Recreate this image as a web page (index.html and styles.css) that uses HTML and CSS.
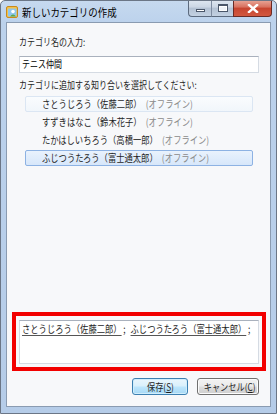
FILE: index.html
```html
<!DOCTYPE html>
<html lang="ja">
<head>
<meta charset="utf-8">
<title>新しいカテゴリの作成</title>
<link rel="stylesheet" href="styles.css">
</head>
<body>
<div class="window">
  <div class="titlebar">
    <svg class="appicon" width="14" height="14" viewBox="0 0 14 14">
      <rect x="1.5" y="1.5" width="11" height="11" rx="1.5" fill="#f4c24a" stroke="#c98a1c"/>
      <rect x="3" y="3.5" width="8.5" height="8" rx="1" fill="#8fc6ec"/>
      <circle cx="8" cy="6.5" r="1.8" fill="#ffffff"/>
      <path d="M5 11.5 Q8 7.5 11 11.5 Z" fill="#5ba84a"/>
    </svg>
    <span class="title"><span class="cond-t">新しいカテゴリの作成</span></span>
    <div class="caption">
      <div class="cbtn cmin"><span class="g-min"></span></div>
      <div class="cbtn cmax"><span class="g-max"></span></div>
      <div class="cbtn cclose">
        <svg width="12" height="9" viewBox="0 0 12 9"><path d="M2 1 L10 8 M10 1 L2 8" stroke="#ffffff" stroke-width="2.4" stroke-linecap="square"/></svg>
      </div>
    </div>
  </div>
  <div class="client">
    <div class="label"><span class="cond">カテゴリ名の入力:</span></div>
    <div class="input"><span class="cond">テニス仲間</span></div>
    <div class="label label2"><span class="cond">カテゴリに追加する知り合いを選択してください:</span></div>
    <ul class="list">
      <li class="item hover"><span class="cond wide">さとうじろう（佐藤二郎）<span class="status">(オフライン)</span></span></li>
      <li class="item"><span class="cond wide">すずきはなこ（鈴木花子）<span class="status">(オフライン)</span></span></li>
      <li class="item"><span class="cond wide">たかはしいちろう（高橋一郎）<span class="status">(オフライン)</span></span></li>
      <li class="item selected"><span class="cond wide">ふじつうたろう（富士通太郎）<span class="status">(オフライン)</span></span></li>
    </ul>
    <div class="highlight">
      <div class="textarea"><span class="cond wide"><span class="u">さとうじろう（佐藤二郎）</span><span class="sep">;</span><span class="u">ふじつうたろう（富士通太郎）</span><span class="sep">;</span></span></div>
    </div>
    <div class="buttons">
      <div class="btn default"><span class="cond-b">保存(<span class="ul">S</span>)</span></div>
      <div class="btn cancel"><span class="cond-b">キャンセル(<span class="ul">C</span>)</span></div>
    </div>
  </div>
</div>
</body>
</html>
```

FILE: styles.css
```css
html, body {
  margin: 0;
  padding: 0;
  background: #ffffff;
}
body {
  width: 277px;
  height: 414px;
  overflow: hidden;
  font-family: "Noto Sans CJK JP", "Noto Sans", sans-serif;
}
.window {
  box-sizing: border-box;
  width: 277px;
  height: 414px;
  border: 1px solid #6b7686;
  border-radius: 5px 5px 0 0;
  background: linear-gradient(#c6d9ef 0px, #bcd2ec 22px, #b5cce8 100%);
  padding: 0 5px 6px 5px;
  display: flex;
  flex-direction: column;
  overflow: hidden;
}
.titlebar {
  height: 21px;
  display: flex;
  align-items: center;
  flex: none;
}
.appicon {
  flex: none;
  margin-left: -1px;
  margin-top: 1px;
}
.title {
  margin-left: 3px;
  margin-top: 1px;
  font-size: 11px;
  color: #000000;
  line-height: 14px;
  white-space: nowrap;
}
.cond-t {
  display: inline-block;
  transform: scaleX(0.86);
  transform-origin: 0 50%;
}
.caption {
  margin-left: auto;
  margin-right: -1px;
  align-self: flex-start;
  margin-top: -1px;
  display: flex;
  height: 17px;
}
.cbtn {
  box-sizing: border-box;
  height: 17px;
  border: 1px solid #5c6a7e;
  border-top: none;
  display: flex;
  align-items: center;
  justify-content: center;
}
.cmin {
  width: 23px;
  border-radius: 0 0 0 4px;
  border-right: none;
  background: linear-gradient(#dfe7f1 0%, #cbd6e4 45%, #b3c1d3 50%, #c3d1e2 100%);
}
.cmax {
  width: 22px;
  border-right: none;
  border-left: 1px solid #7d8ba0;
  background: linear-gradient(#dfe7f1 0%, #cbd6e4 45%, #b3c1d3 50%, #c3d1e2 100%);
}
.cclose {
  width: 39px;
  border-radius: 0 0 4px 0;
  background: linear-gradient(#e9a99a 0%, #d8705e 45%, #c7442f 50%, #d2583f 100%);
  border-color: #6a2b25;
}
.g-min {
  display: block;
  width: 9px;
  height: 3px;
  margin-top: 5px;
  background: #ffffff;
  border: 1px solid #4a5669;
  box-sizing: border-box;
}
.g-max {
  display: block;
  width: 10px;
  height: 8px;
  box-sizing: border-box;
  border: 1px solid #4a5669;
  border-top-width: 2px;
  background: #eef2f7;
  box-shadow: inset 0 0 0 1px #ffffff;
}
.client {
  flex: 1;
  box-sizing: border-box;
  background: #f7f8fa;
  border: 1px solid #8a9bb1;
  padding: 12px 11px 11px 12px;
  display: flex;
  flex-direction: column;
  font-size: 10px;
  color: #1e1e1e;
  min-width: 0;
}
.cond {
  display: inline-block;
  white-space: nowrap;
  transform: scaleX(0.8);
  transform-origin: 0 50%;
}
.cond.wide {
  transform: scaleX(0.83);
}
.label {
  line-height: 14px;
  height: 14px;
  white-space: nowrap;
  overflow: hidden;
}
.label2 {
  margin-top: 5px;
}
.input {
  margin-top: 7px;
  box-sizing: border-box;
  height: 17px;
  border: 1px solid #d5dbe3;
  border-top-color: #a9b1bd;
  background: #ffffff;
  line-height: 14px;
  padding-left: 2px;
  color: #000000;
  white-space: nowrap;
  overflow: hidden;
}
.list {
  list-style: none;
  margin: 4px 0 0 0;
  padding: 0 6px;
  flex: 1;
}
.item {
  box-sizing: border-box;
  height: 16px;
  margin-bottom: 2px;
  border: 1px solid transparent;
  border-radius: 2px;
  padding-left: 16px;
  line-height: 14px;
  white-space: nowrap;
  overflow: hidden;
  color: #1e1e1e;
}
.item.hover {
  border-color: #dbe6f3;
  background: linear-gradient(#fafcfe, #f1f6fb);
}
.item.selected {
  border-color: #8db2e3;
  background: linear-gradient(#e9f2fd, #d7e7fa);
}
.status {
  color: #8a8a8a;
  margin-left: 5px;
}
.highlight {
  flex: none;
  margin: 0 -7px;
  border: 4px solid #f20000;
  padding: 4px 3px 3px 3px;
}
.textarea {
  box-sizing: border-box;
  height: 44px;
  background: #ffffff;
  border: 1px solid #d5dbe3;
  border-top-color: #a9b1bd;
  padding: 1px 2px 0 2px;
  line-height: 14px;
  white-space: nowrap;
  overflow: hidden;
  color: #1e1e1e;
}
.u {
  text-decoration: underline;
  text-decoration-color: #555555;
  text-underline-offset: 2px;
}
.sep {
  margin: 0 6px 0 2px;
}
.buttons {
  flex: none;
  margin-top: 7px;
  display: flex;
  justify-content: flex-end;
  gap: 9px;
}
.btn {
  box-sizing: border-box;
  height: 17px;
  border: 1px solid #707070;
  border-radius: 3px;
  background: linear-gradient(#f2f2f2 0%, #ebebeb 48%, #dddddd 52%, #cfcfcf 100%);
  box-shadow: inset 0 0 0 1px #fcfcfc;
  line-height: 15px;
  text-align: center;
  color: #1e1e1e;
  white-space: nowrap;
  overflow: hidden;
}
.cond-b {
  display: inline-block;
  transform: scaleX(0.82);
  transform-origin: 50% 50%;
}
.btn.default {
  width: 56px;
  border-color: #3c7fb1;
  background: linear-gradient(#eaf6fd 0%, #d9f0fc 48%, #bee6fd 52%, #a7d9f5 100%);
  box-shadow: inset 0 0 0 1px #d0eefc;
}
.btn.cancel {
  width: 62px;
}
.ul {
  text-decoration: underline;
}
```
